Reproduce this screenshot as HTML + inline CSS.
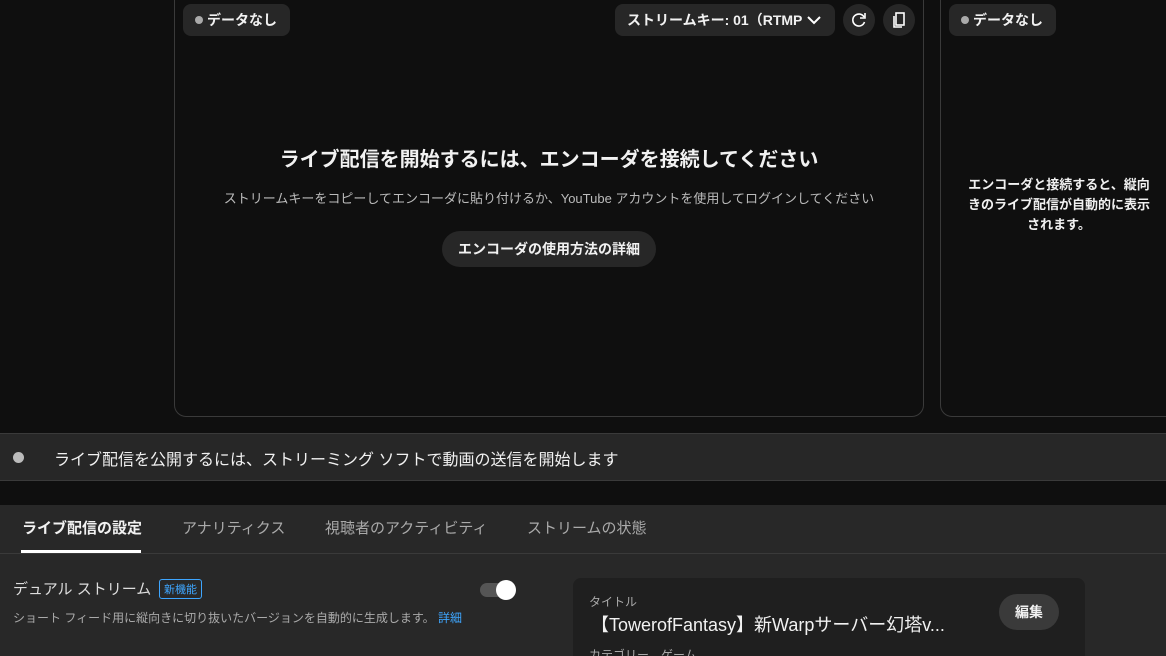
<!DOCTYPE html><html><head><meta charset="utf-8"><style>
html,body{margin:0;width:1166px;height:656px;overflow:hidden}
body{background:#0f0f0f;font-family:"Liberation Sans","Noto Sans CJK JP",sans-serif;color:#f1f1f1;position:relative}
.a{position:absolute}
.card{border:1px solid #3a3a3a;border-radius:12px;background:#0f0f0f}
.pill{background:#272727;border-radius:8px;font-size:14px;font-weight:bold;display:flex;align-items:center}
.dot{width:8px;height:8px;border-radius:50%;background:#aaa;display:inline-block;margin-right:4px}
.circ{width:32px;height:32px;border-radius:50%;background:#272727}
</style></head><body>
<div class="a card" style="left:174px;top:-12px;width:748px;height:427px"></div>
<div class="a card" style="left:940px;top:-12px;width:240px;height:427px"></div>
<div class="a pill" style="left:183px;top:4px;width:107px;height:32px;padding-left:12px;box-sizing:border-box"><span class="dot"></span>データなし</div>
<div class="a pill" style="left:949px;top:4px;width:107px;height:32px;padding-left:12px;box-sizing:border-box"><span class="dot"></span>データなし</div>
<div class="a pill" style="left:615px;top:4px;width:220px;height:32px;padding-left:12px;box-sizing:border-box">ストリームキー: 01（RTMP <svg width="16" height="16" style="margin-left:4px" viewBox="0 0 16 16"><path d="M2 5l6 6 6-6" stroke="#fff" stroke-width="2" fill="none"/></svg></div>
<div class="a circ" style="left:843px;top:4px"><svg width="32" height="32" viewBox="0 0 32 32"><path d="M21 13a6 6 0 1 0 0.5 5" stroke="#fff" stroke-width="1.6" fill="none"/><path d="M22 9v5h-5" stroke="#fff" stroke-width="1.6" fill="none"/></svg></div>
<div class="a circ" style="left:883px;top:4px"><svg width="32" height="32" viewBox="0 0 32 32"><rect x="13" y="9" width="8" height="12" stroke="#fff" stroke-width="1.6" fill="none"/><path d="M11 12v11h8" stroke="#fff" stroke-width="1.6" fill="none"/></svg></div>
<div class="a" style="left:174px;top:143px;width:750px;text-align:center;font-size:20px;font-weight:bold">ライブ配信を開始するには、エンコーダを接続してください</div>
<div class="a" style="left:174px;top:188px;width:750px;text-align:center;font-size:13px;color:#bbb">ストリームキーをコピーしてエンコーダに貼り付けるか、YouTube アカウントを使用してログインしてください</div>
<div class="a" style="left:442px;top:231px;width:214px;height:36px;border-radius:18px;background:#272727;font-size:14px;font-weight:bold;display:flex;align-items:center;justify-content:center">エンコーダの使用方法の詳細</div>
<div class="a" style="left:964px;top:175px;width:190px;text-align:center;font-size:13px;font-weight:bold;line-height:20px">エンコーダと接続すると、縦向きのライブ配信が自動的に表示されます。</div>
<div class="a" style="left:0;top:433px;width:1166px;height:46px;background:#272727;border-top:1px solid #3a3a3a;border-bottom:1px solid #3a3a3a"></div>
<div class="a" style="left:13px;top:452px;width:11px;height:11px;border-radius:50%;background:#bbb"></div>
<div class="a" style="left:54px;top:446px;font-size:16px">ライブ配信を公開するには、ストリーミング ソフトで動画の送信を開始します</div>
<div class="a" style="left:0;top:505px;width:1166px;height:151px;background:#282828"></div>
<div class="a" style="left:0;top:553px;width:1166px;height:1px;background:#3a3a3a"></div>
<div class="a" style="left:22px;top:517px;font-size:15px;font-weight:bold">ライブ配信の設定</div>
<div class="a" style="left:21px;top:550px;width:120px;height:3px;background:#fff"></div>
<div class="a" style="left:182px;top:517px;font-size:15px;color:#aaa">アナリティクス</div>
<div class="a" style="left:325px;top:517px;font-size:15px;color:#aaa">視聴者のアクティビティ</div>
<div class="a" style="left:527px;top:517px;font-size:15px;color:#aaa">ストリームの状態</div>
<div class="a" style="left:13px;top:578px;font-size:15px;color:#ddd">デュアル ストリーム</div>
<div class="a" style="left:159px;top:579px;font-size:11px;color:#3ea6ff;border:1px solid #3ea6ff;border-radius:3px;padding:1px 4px">新機能</div>
<div class="a" style="left:480px;top:583px;width:34px;height:14px;border-radius:7px;background:#555"></div>
<div class="a" style="left:496px;top:580px;width:20px;height:20px;border-radius:50%;background:#fff"></div>
<div class="a" style="left:13px;top:609px;font-size:12px;color:#aaa">ショート フィード用に縦向きに切り抜いたバージョンを自動的に生成します。 <span style="color:#3ea6ff">詳細</span></div>
<div class="a" style="left:573px;top:578px;width:512px;height:78px;border-radius:8px 8px 0 0;background:#1f1f1f"></div>
<div class="a" style="left:589px;top:593px;font-size:12px;color:#aaa">タイトル</div>
<div class="a" style="left:591px;top:611px;font-size:18px">【TowerofFantasy】新Warpサーバー幻塔v...</div>
<div class="a" style="left:589px;top:646px;font-size:12px;color:#aaa">カテゴリー　ゲーム</div>
<div class="a" style="left:999px;top:594px;width:60px;height:36px;border-radius:18px;background:#3a3a3a;font-size:14px;font-weight:bold;display:flex;align-items:center;justify-content:center">編集</div>
</body></html>
